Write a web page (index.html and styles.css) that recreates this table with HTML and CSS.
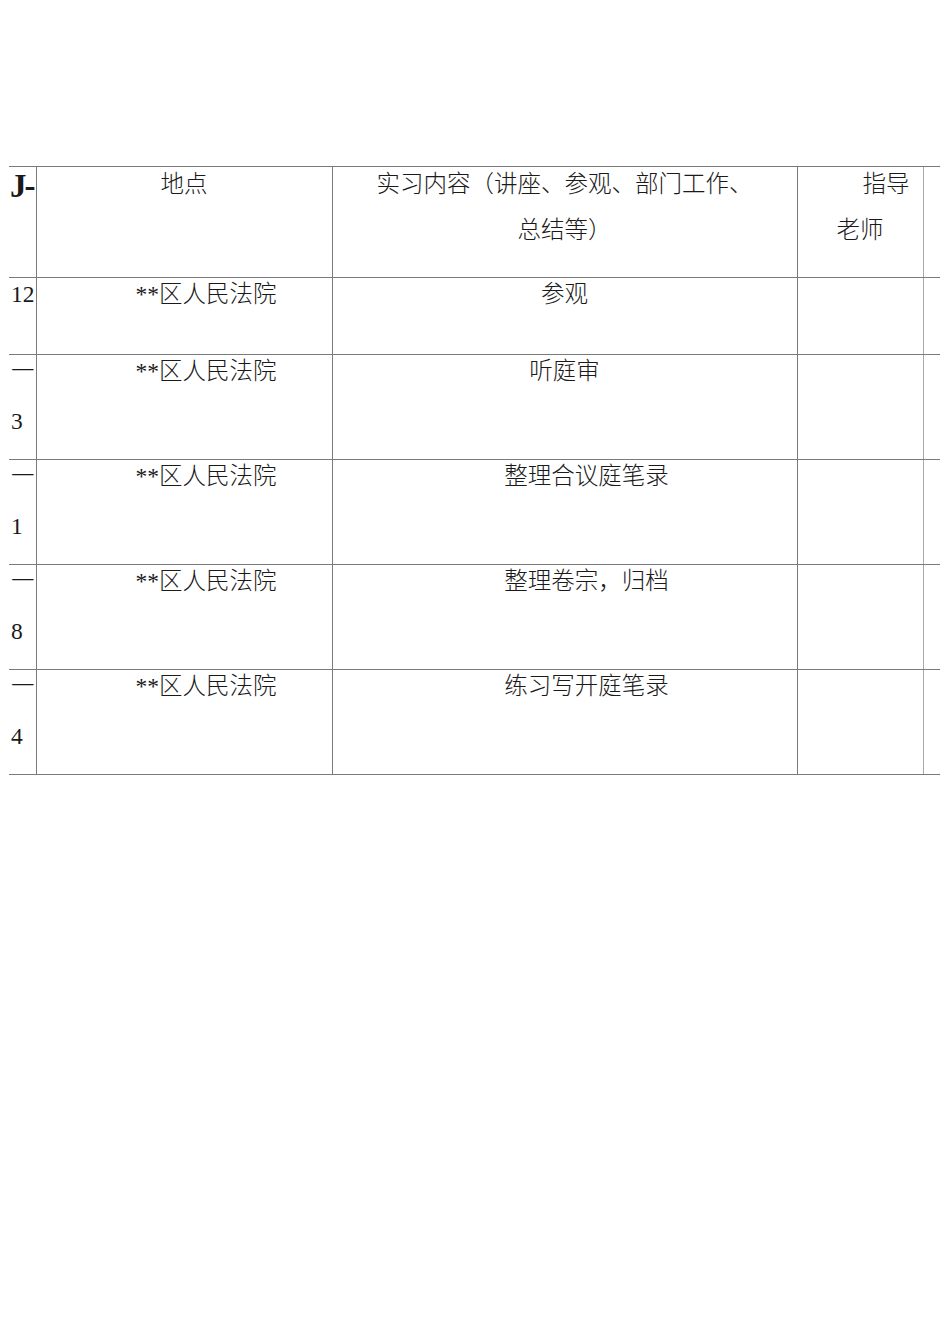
FILE: index.html
```html
<!DOCTYPE html>
<html lang="zh">
<head>
<meta charset="utf-8">
<title>实习安排</title>
<link rel="stylesheet" href="styles.css">
</head>
<body>
<div class="page">
  <table class="sheet">
    <colgroup>
      <col class="c1"><col class="c2"><col class="c3"><col class="c4"><col class="c5">
    </colgroup>
    <tr class="head">
      <td class="num"><div class="in"><b class="jl">J-</b></div></td>
      <td class="mid"><div class="in">地点</div></td>
      <td class="mid"><div class="in">实习内容（讲座、参观、部门工作、<br>总结等）</div></td>
      <td class="mid"><div class="in"><span class="ind">指导</span><br>老师</div></td>
      <td class="tail"></td>
    </tr>
    <tr class="short">
      <td class="num"><div class="in">12</div></td>
      <td class="mid"><div class="in ind">**区人民法院</div></td>
      <td class="mid"><div class="in">参观</div></td>
      <td></td>
      <td class="tail"></td>
    </tr>
    <tr class="tall">
      <td class="num"><div class="in">一<br>3</div></td>
      <td class="mid"><div class="in ind">**区人民法院</div></td>
      <td class="mid"><div class="in">听庭审</div></td>
      <td></td>
      <td class="tail"></td>
    </tr>
    <tr class="tall">
      <td class="num"><div class="in">一<br>1</div></td>
      <td class="mid"><div class="in ind">**区人民法院</div></td>
      <td class="mid"><div class="in ind">整理合议庭笔录</div></td>
      <td></td>
      <td class="tail"></td>
    </tr>
    <tr class="tall">
      <td class="num"><div class="in">一<br>8</div></td>
      <td class="mid"><div class="in ind">**区人民法院</div></td>
      <td class="mid"><div class="in ind">整理卷宗，归档</div></td>
      <td></td>
      <td class="tail"></td>
    </tr>
    <tr class="tall">
      <td class="num"><div class="in">一<br>4</div></td>
      <td class="mid"><div class="in ind">**区人民法院</div></td>
      <td class="mid"><div class="in ind">练习写开庭笔录</div></td>
      <td></td>
      <td class="tail"></td>
    </tr>
  </table>
</div>
</body>
</html>
```

FILE: styles.css
```css
html, body {
  margin: 0;
  padding: 0;
  background: #ffffff;
}

body {
  width: 950px;
  height: 1319px;
  overflow: hidden;
  font-family: "Liberation Serif", "Noto Sans CJK SC", serif;
  color: #1a1a1a;
}

.page {
  padding: 166px 0 0 9px;
}

.sheet {
  border-collapse: collapse;
  table-layout: fixed;
  width: 931px;
  font-size: 23.5px;
  font-weight: 300;
}

.c1 { width: 27px; }
.c2 { width: 296px; }
.c3 { width: 465px; }
.c4 { width: 126px; }
.c5 { width: 17px; }

.sheet td {
  padding: 0;
  vertical-align: top;
  border-top: 1px solid #7a7a7a;
  border-bottom: 1px solid #7a7a7a;
  border-left: 1px solid #7a7a7a;
  overflow: hidden;
  white-space: nowrap;
}

.sheet td:first-child {
  border-left: none;
}

.sheet td.tail {
  border-left: 1px solid #a8a8a8;
}

.head { height: 111px; }
.short { height: 77px; }
.tall { height: 105px; }

.head .in {
  line-height: 46px;
  margin-top: -6px;
}

.short .in,
.tall .in {
  line-height: 50px;
  margin-top: -9px;
}

.mid {
  text-align: center;
}

.num .in {
  padding-left: 2px;
}

.head .num .in {
  padding-left: 1px;
}

.jl {
  font-weight: 700;
  font-size: 33px;
  letter-spacing: -2px;
  line-height: 46px;
  position: relative;
  top: 2px;
}

.ind {
  padding-left: 44px;
}

span.ind {
  padding-left: 52px;
}
```
